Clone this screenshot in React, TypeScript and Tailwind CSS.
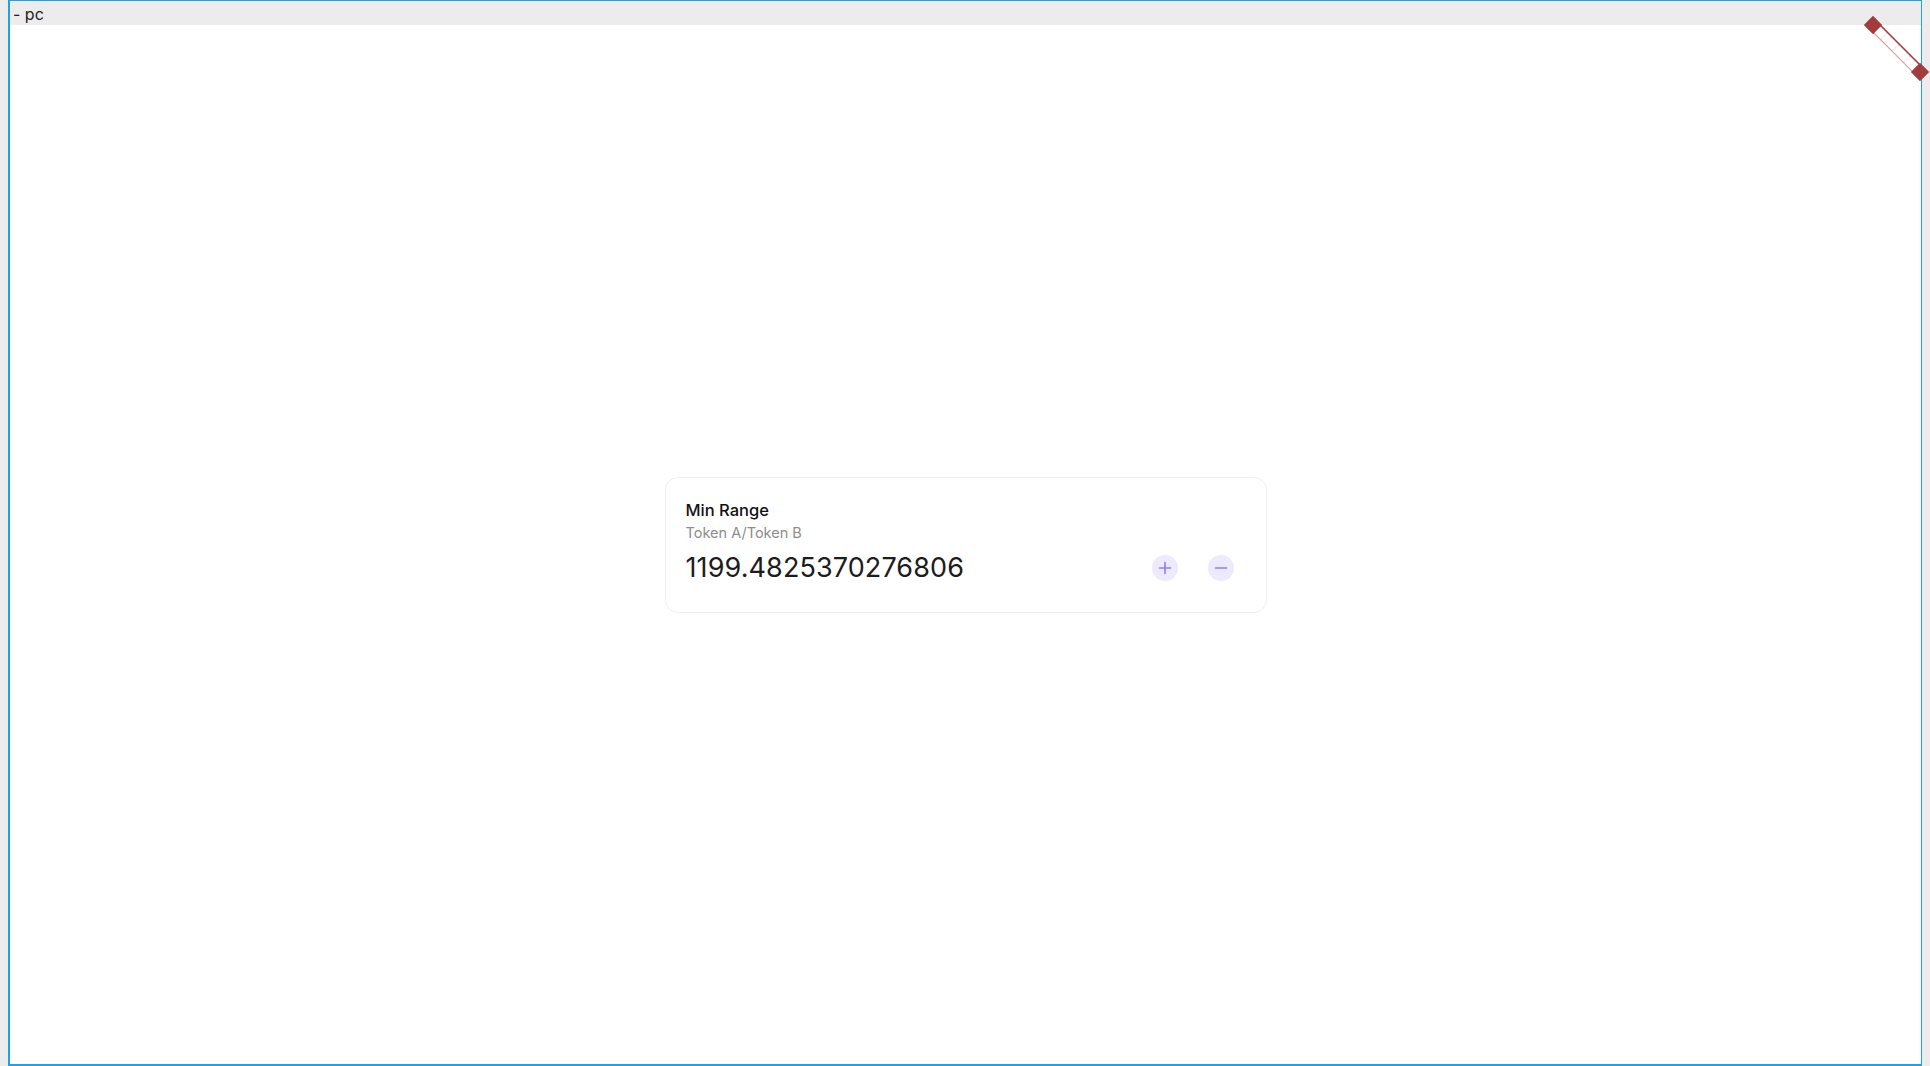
import React from "react";

function Plus() {
  return (
    <svg width="16" height="16" viewBox="0 0 16 16" fill="none">
      <path d="M8 2.5v11M2.5 8h11" stroke="#8f7cf7" strokeWidth="1.6" strokeLinecap="round" />
    </svg>
  );
}
function Minus() {
  return (
    <svg width="16" height="16" viewBox="0 0 16 16" fill="none">
      <path d="M2.5 8h11" stroke="#8f7cf7" strokeWidth="1.6" strokeLinecap="round" />
    </svg>
  );
}

export default function App() {
  return (
    <div
      className="relative w-[1930px] h-[1066px] bg-[#ececec] overflow-hidden"
      style={{ fontFamily: "Inter, 'Noto Sans', sans-serif" }}
    >
      <div className="ml-[8px] w-[1914px] h-[1066px] border border-l-2 border-b-2 border-[#1ea2e6] flex flex-col">
        <div className="h-[24px] bg-[#ececec] flex items-center pl-[3px] text-[16px] text-[#222] leading-none">
          <span className="mt-[1px]">- pc</span>
        </div>
        <div className="flex-1 bg-white flex items-center justify-center">
          <div className="w-[602px] h-[136px] rounded-[13px] border border-[#efefef] bg-white px-5 pt-[20px]">
            <div className="text-[16.5px] leading-[24px] font-medium text-[#111]">Min Range</div>
            <div className="mt-[1px] text-[14.5px] leading-[20px] text-[#8d8d8d]">Token A/Token B</div>
            <div className="mt-[7px] flex items-center justify-between">
              <div className="text-[27px] leading-[36px] tracking-[0.1px] text-[#1c1c1e]">1199.4825370276806</div>
              <div className="flex items-center gap-[30px] mr-[12px]">
                <button className="w-[26px] h-[26px] rounded-full bg-[#eeeafe] flex items-center justify-center">
                  <Plus />
                </button>
                <button className="w-[26px] h-[26px] rounded-full bg-[#eeeafe] flex items-center justify-center">
                  <Minus />
                </button>
              </div>
            </div>
          </div>
        </div>
      </div>
      <svg className="absolute left-0 top-0 pointer-events-none" width="1930" height="1066">
        <g transform="translate(1873 25) rotate(45)">
          <rect x="0" y="-5" width="66.5" height="10" fill="#ffffff" />
          <path d="M16 -5v10M32 -5v10M48 -5v10" stroke="#f3d6d6" strokeWidth="1" strokeDasharray="2 2" />
          <line x1="0" y1="-5" x2="66.5" y2="-5" stroke="#a13a3a" strokeWidth="1.6" />
          <line x1="0" y1="5" x2="66.5" y2="5" stroke="#d8a3a3" strokeWidth="1.2" />
          <rect x="-6.5" y="-6.5" width="13" height="13" fill="#a23c3c" />
          <rect x="60" y="-6.5" width="13" height="13" fill="#a23c3c" />
        </g>
      </svg>
    </div>
  );
}
